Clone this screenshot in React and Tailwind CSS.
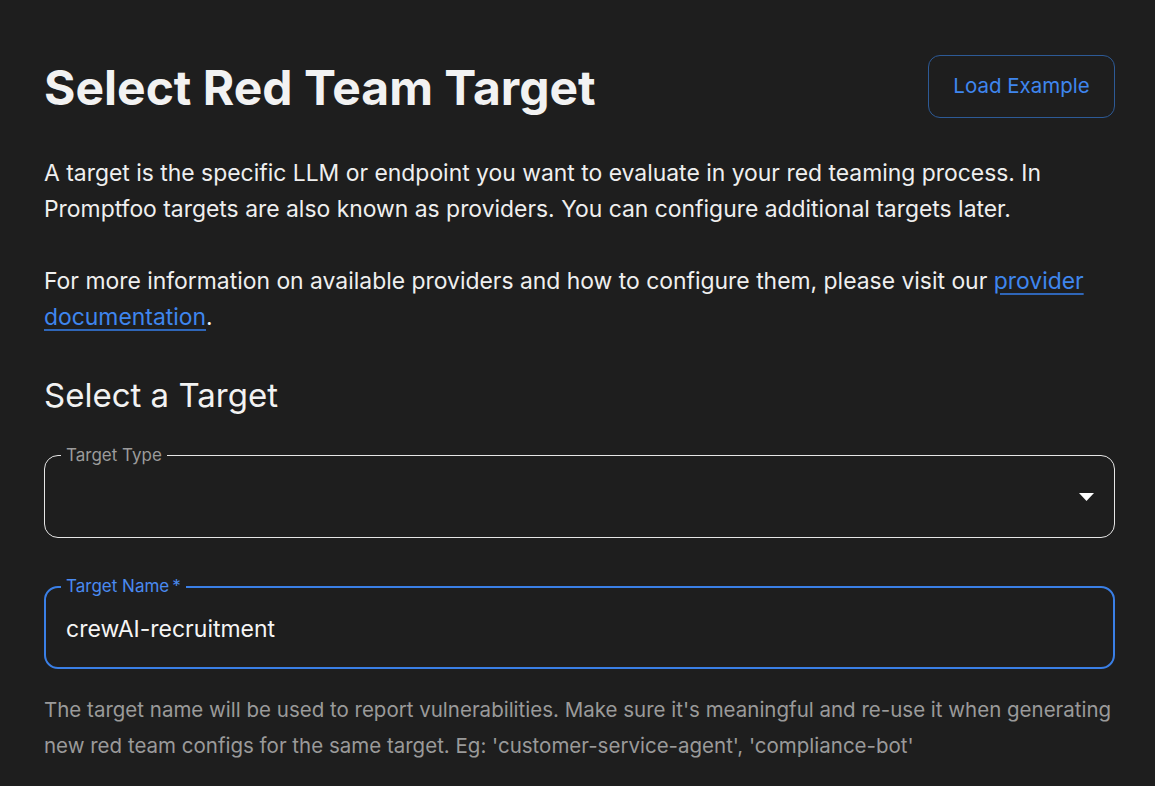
export default function App() {
  return (
    <div className="min-h-screen bg-[#1e1e1e] text-[#efefef]" style={{ fontFamily: 'Inter, "Noto Sans", sans-serif' }}>
      <div className="pl-[44px] pr-[40px] pt-[55px]">
        <div className="flex items-start justify-between">
          <h1 className="mt-[2px] text-[48px] font-bold leading-[62px] text-[#f2f2f2]">Select Red Team Target</h1>
          <button className="h-[63px] w-[187px] rounded-[12px] border border-[#2d5a96] text-[20.5px] text-[#3f86ee]">Load Example</button>
        </div>
        <p className="mt-[36px] text-[22.9px] leading-[36px]">
          A target is the specific LLM or endpoint you want to evaluate in your red teaming process. In Promptfoo targets are also known as providers. You can configure additional targets later.
        </p>
        <p className="mt-[36px] text-[22.9px] leading-[36px]">
          For more information on available providers and how to configure them, please visit our{' '}
          <a href="#" className="text-[#3f86ee] underline decoration-[#2f66b8] underline-offset-[4px]">provider documentation</a>.
        </p>
        <h2 className="mt-[36px] text-[33px] leading-[48px] font-normal text-[#f2f2f2]">Select a Target</h2>
        <div className="relative mt-[36px] flex h-[83px] items-center justify-end rounded-[14px] border border-[#e6e6e6] pr-[20px]">
          <span className="absolute -top-[12px] left-[16px] bg-[#1e1e1e] px-[5px] text-[17px] leading-[22px] text-[#9b9b9b]">Target Type</span>
          <svg width="15" height="8" viewBox="0 0 15 8"><path d="M0 0 L15 0 L7.5 8 Z" fill="#ffffff" /></svg>
        </div>
        <div className="relative mt-[48px] flex h-[83px] items-center rounded-[14px] border-2 border-[#3a7fe6] px-[20px] pt-[3px]">
          <span className="absolute -top-[13px] left-[15px] bg-[#1e1e1e] px-[5px] text-[17px] leading-[22px] text-[#4a8af0]">Target Name{'\u2009'}*</span>
          <span className="text-[23px] text-[#f5f5f5]">crewAI-recruitment</span>
        </div>
        <p className="mt-[23px] text-[20.5px] leading-[36px] text-[#9a9a9a]">
          The target name will be used to report vulnerabilities. Make sure it's meaningful and re-use it when generating new red team configs for the same target. Eg: 'customer-service-agent', 'compliance-bot'
        </p>
      </div>
    </div>
  );
}
